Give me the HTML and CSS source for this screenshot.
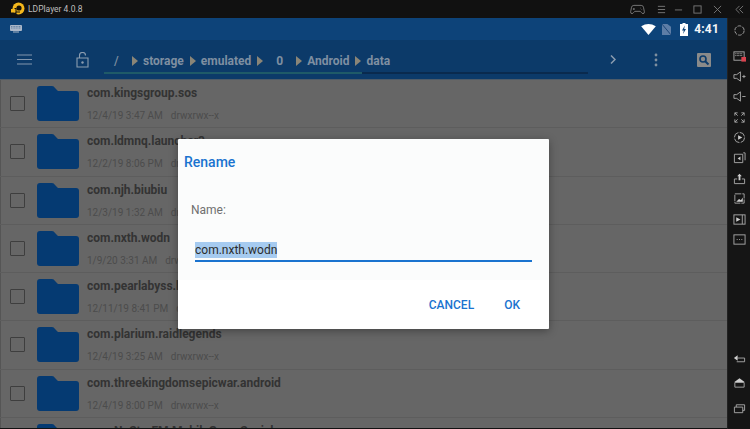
FILE: index.html
```html
<!DOCTYPE html>
<html lang="en">
<head>
<meta charset="utf-8">
<title>LDPlayer</title>
<link rel="stylesheet" href="styles.css">
</head>
<body>
<div class="window">
  <header class="titlebar">
    <svg class="logo" viewBox="0 0 14 14"><circle cx="7.500" cy="6.500" r="6" fill="#f5b81c"/><circle cx="8" cy="6" r="2.600" fill="#171208"/><rect x="3.500" y="6" width="2" height="7.500" fill="#111"/><rect x="0" y="7" width="4.500" height="3.500" fill="#f5b81c"/><rect x="5" y="9.500" width="4" height="1" fill="#171208"/></svg>
    <span class="app-name">LDPlayer 4.0.8</span>
    <div class="win-controls">
      <svg viewBox="0 0 16 12" class="wc wc-pad"><path d="M4 1.500h8q2 0 2.500 2l1 5q.2 2-1.500 2-1 0-2-1.500l-1-1H5l-1 1Q3 10.500 2 10.500 .3 10.500 .5 8.500l1-5Q2 1.500 4 1.500ZM4 4.500v2M3 5.500h2M11 4.500h.5M12.500 6h.5" /></svg>
      <svg viewBox="0 0 10 10" class="wc wc-menu"><path d="M1 1.500h8M1 5h8M1 8.500h8"/></svg>
      <svg viewBox="0 0 10 10" class="wc wc-min"><path d="M1 5.500h8"/></svg>
      <svg viewBox="0 0 10 10" class="wc wc-max"><rect x="1" y="1" width="8" height="8"/></svg>
      <svg viewBox="0 0 10 10" class="wc wc-close"><path d="M1 1l8 8M9 1l-8 8"/></svg>
      <svg viewBox="0 0 10 10" class="wc wc-collapse"><path d="M5 1L1 5l4 4M9 1L5 5l4 4"/></svg>
    </div>
  </header>
  <div class="body">
    <main class="android">
      <div class="statusbar">
        <svg class="kbd" viewBox="0 0 12 8"><rect width="12" height="6" rx="1" fill="#aab7c8"/><path d="M1 1.500h10M1 3h10" stroke="#39618f" stroke-width=".6" stroke-dasharray="1 .6"/><rect x="3" y="6.500" width="6" height="1" fill="#aab7c8"/></svg>
        <div class="status-right">
          <svg class="st-wifi" viewBox="0 0 16 12"><path d="M0 2.500Q8-2.500 16 2.500L8 12Z" fill="#fff"/></svg>
          <svg class="st-sim" viewBox="0 0 10 12"><path d="M0 0h6l4 3v9H0Z" fill="#5d7da6"/><path d="M0 0l10 12" stroke="#163f70" stroke-width="1"/></svg>
          <svg class="st-batt" viewBox="0 0 8 13"><path d="M2.500 0h3v1H8v12H0V1h2.500Z" fill="#fff"/><path d="M4.800 2.500L2 7.500h1.800L3 11l3-5H4.200Z" fill="#0d4379"/></svg>
          <span class="clock">4:41</span>
        </div>
      </div>
      <div class="toolbar">
        <svg class="tb-menu" viewBox="0 0 15 11"><path d="M0 1h15M0 5.500h15M0 10h15"/></svg>
        <svg class="tb-lock" viewBox="0 0 13 16"><path d="M3.500 6V3.500a3 3 0 0 1 6 0M1 6h11v9H1Z"/><circle cx="6.500" cy="10.500" r="1.200" fill="#8c9db0" stroke="none"/></svg>
        <div class="crumbs-wrap">
          <nav class="crumbs">
            <span class="crumb crumb-root">/</span><i class="arrow"></i>
            <span class="crumb">storage</span><i class="arrow"></i>
            <span class="crumb">emulated</span><i class="arrow"></i>
            <span class="crumb crumb-zero">0</span><i class="arrow"></i>
            <span class="crumb">Android</span><i class="arrow"></i>
            <span class="crumb">data</span>
          </nav>
          <div class="progress"></div>
        </div>
        <svg class="tb-next" viewBox="0 0 6 9"><path d="M1 .5L5 4.500 1 8.500"/></svg>
        <svg class="tb-more" viewBox="0 0 4 14"><circle cx="2" cy="2" r="1.400"/><circle cx="2" cy="7" r="1.400"/><circle cx="2" cy="12" r="1.400"/></svg>
        <svg class="tb-search" viewBox="0 0 14 14"><rect width="14" height="14" rx="1" fill="#8a8a8a"/><circle cx="6" cy="6" r="3" fill="none" stroke="#0c3b6b" stroke-width="1.600"/><path d="M8.200 8.200L11.500 11.500" stroke="#0c3b6b" stroke-width="2"/></svg>
      </div>
      <ul class="files">
        <li class="row"><span class="check"></span><svg class="folder" viewBox="0 0 42 35"><path d="M3 0h12q2 0 3 2l3 3h18q3 0 3 3v24q0 3-3 3H3q-3 0-3-3V3q0-3 3-3Z"/></svg><div class="info"><div class="name">com.kingsgroup.sos</div><div class="meta"><span>12/4/19 3:47 AM</span><span>drwxrwx--x</span></div></div></li>
        <li class="row"><span class="check"></span><svg class="folder" viewBox="0 0 42 35"><path d="M3 0h12q2 0 3 2l3 3h18q3 0 3 3v24q0 3-3 3H3q-3 0-3-3V3q0-3 3-3Z"/></svg><div class="info"><div class="name">com.ldmnq.launcher3</div><div class="meta"><span>12/2/19 8:06 PM</span><span>drwxrwx--x</span></div></div></li>
        <li class="row"><span class="check"></span><svg class="folder" viewBox="0 0 42 35"><path d="M3 0h12q2 0 3 2l3 3h18q3 0 3 3v24q0 3-3 3H3q-3 0-3-3V3q0-3 3-3Z"/></svg><div class="info"><div class="name">com.njh.biubiu</div><div class="meta"><span>12/3/19 1:32 AM</span><span>drwxrwx--x</span></div></div></li>
        <li class="row"><span class="check"></span><svg class="folder" viewBox="0 0 42 35"><path d="M3 0h12q2 0 3 2l3 3h18q3 0 3 3v24q0 3-3 3H3q-3 0-3-3V3q0-3 3-3Z"/></svg><div class="info"><div class="name">com.nxth.wodn</div><div class="meta"><span>1/9/20 3:31 AM</span><span>drwxrwx--x</span></div></div></li>
        <li class="row"><span class="check"></span><svg class="folder" viewBox="0 0 42 35"><path d="M3 0h12q2 0 3 2l3 3h18q3 0 3 3v24q0 3-3 3H3q-3 0-3-3V3q0-3 3-3Z"/></svg><div class="info"><div class="name">com.pearlabyss.blackdesertm</div><div class="meta"><span>12/11/19 8:41 PM</span><span>drwxrwx--x</span></div></div></li>
        <li class="row"><span class="check"></span><svg class="folder" viewBox="0 0 42 35"><path d="M3 0h12q2 0 3 2l3 3h18q3 0 3 3v24q0 3-3 3H3q-3 0-3-3V3q0-3 3-3Z"/></svg><div class="info"><div class="name">com.plarium.raidlegends</div><div class="meta"><span>12/4/19 3:25 AM</span><span>drwxrwx--x</span></div></div></li>
        <li class="row"><span class="check"></span><svg class="folder" viewBox="0 0 42 35"><path d="M3 0h12q2 0 3 2l3 3h18q3 0 3 3v24q0 3-3 3H3q-3 0-3-3V3q0-3 3-3Z"/></svg><div class="info"><div class="name">com.threekingdomsepicwar.android</div><div class="meta"><span>12/4/19 8:00 PM</span><span>drwxrwx--x</span></div></div></li>
        <li class="row"><span class="check"></span><svg class="folder" viewBox="0 0 42 35"><path d="M3 0h12q2 0 3 2l3 3h18q3 0 3 3v24q0 3-3 3H3q-3 0-3-3V3q0-3 3-3Z"/></svg><div class="info"><div class="name">com.NoStarFM.MobileGameSocial</div></div></li>
      </ul>
      <div class="dialog">
        <h2 class="dlg-title">Rename</h2>
        <div class="dlg-label">Name:</div>
        <div class="dlg-input"><span class="selected">com.nxth.wodn</span></div>
        <div class="dlg-actions"><span class="btn">CANCEL</span><span class="btn">OK</span></div>
      </div>
    </main>
    <aside class="sidebar">
      <svg class="side-first" viewBox="0 0 14 14"><circle cx="7" cy="7" r="5" stroke-dasharray="4 1.200"/></svg>
      <svg viewBox="0 0 14 14"><rect x="1" y="2" width="11" height="9"/><path d="M2.500 4h8M2.500 6h8" stroke-dasharray="1 .6"/><rect class="red" x="9" y="7.500" width="5" height="5"/></svg>
      <svg viewBox="0 0 14 14"><path d="M1 5h3l4-3v10L4 9H1ZM10 7h3.500M11.800 5.300v3.400"/></svg>
      <svg viewBox="0 0 14 14"><path d="M1 5h3l4-3v10L4 9H1ZM10 7h3.500"/></svg>
      <svg viewBox="0 0 14 14"><path d="M2 5V2h3M2 2l3 3M12 5V2H9M12 2L9 5M2 9v3h3M2 12l3-3M12 9v3H9M12 12L9 9"/></svg>
      <svg viewBox="0 0 14 14"><circle cx="7" cy="7" r="5.500" stroke-dasharray="7 1.500"/><path class="fill" d="M5.500 4.500L10 7l-4.500 2.500Z"/></svg>
      <svg viewBox="0 0 14 14"><path d="M1.500 3.500h9v9h-9ZM11 2h2v8"/><path class="fill" d="M8 6v4L5 8Z"/></svg>
      <svg viewBox="0 0 14 14"><path d="M1.500 7.500h3M9.500 7.500h3v5h-11v-5"/><path class="fill" d="M7 2l2.500 2.500H8V9H6V4.500H4.500Z"/></svg>
      <svg viewBox="0 0 14 14"><rect x="2" y="2" width="10" height="10" stroke-dasharray="7 1"/><path class="fill" d="M3.500 10.500l3-3 2 1.500 2-3v4.500Z"/></svg>
      <svg viewBox="0 0 14 14"><rect x="1" y="2" width="12" height="10"/><path d="M10 2v10"/><path class="fill" d="M3.500 4.500L8 7l-4.500 2.500Z"/></svg>
      <svg viewBox="0 0 14 14"><rect x="1" y="2" width="12" height="10"/><path d="M4 7h1M6.500 7h1M9 7h1"/></svg>
      <div class="side-spacer"></div>
      <svg class="nav-back" viewBox="0 0 14 14"><path d="M5 6.500h7.500v4H4"/><path class="fill" d="M1 6.500L5 3.500v6Z"/></svg>
      <svg class="nav-home" viewBox="0 0 14 14"><path d="M2 7h10v5H2Z"/><path class="fill" d="M7 2.500L12.500 6.500h-11Z"/></svg>
      <svg class="nav-recent" viewBox="0 0 14 14"><path d="M1.500 5.500h9v6h-9ZM3.500 5.500V3h9v6h-2"/></svg>
    </aside>
  </div>
</div>
</body>
</html>
```
FILE: styles.css
```css
* { box-sizing: border-box; margin: 0; padding: 0; }
html, body { width: 750px; height: 429px; overflow: hidden; background: #111; }
body { font-family: Roboto, "Liberation Sans", sans-serif; }
.window { width: 750px; height: 429px; display: flex; flex-direction: column; }
.titlebar { height: 18px; flex: none; background: #111; display: flex; align-items: center; padding-left: 11px; }
.logo { width: 14px; height: 14px; }
.app-name { margin-left: 3px; font-size: 8.500px; color: #bdbdbd; }
.win-controls { margin-left: auto; display: flex; align-items: center; }
.wc { fill: none; stroke: #7c7c7c; stroke-width: 1; }
.wc-pad { width: 15px; height: 11px; margin-right: 12px; }
.wc-menu { width: 9px; height: 9px; margin-right: 8px; }
.wc-min { width: 9px; height: 9px; margin-right: 10px; }
.wc-max { width: 9px; height: 9px; margin-right: 11px; }
.wc-close { width: 9px; height: 9px; margin-right: 13px; }
.wc-collapse { width: 9px; height: 9px; margin-right: 6px; }
.body { flex: 1; display: flex; min-height: 0; }
.android { position: relative; width: 727px; flex: none; margin-bottom: 1px; display: flex; flex-direction: column; overflow: hidden; background: #666; }
.statusbar { height: 22px; flex: none; background: #0d4379; display: flex; align-items: center; padding: 0 8px 0 10px; }
.kbd { width: 12px; height: 8px; }
.status-right { margin-left: auto; display: flex; align-items: center; }
.st-wifi { width: 15px; height: 11px; margin-right: 6px; }
.st-sim { width: 9px; height: 11px; margin-right: 9px; }
.st-batt { width: 8px; height: 13px; margin-right: 6px; }
.clock { font-size: 12px; font-weight: 700; color: #f4f6f8; letter-spacing: .2px; }
.toolbar { height: 40px; flex: none; background: #0c3a69; display: flex; align-items: center; border-bottom: 1px solid #4e5b68; position: relative; }
.tb-menu { width: 15px; height: 11px; margin-left: 17px; fill: none; stroke: #8296ad; stroke-width: 1.200; }
.tb-lock { width: 13px; height: 16px; margin-left: 44px; fill: none; stroke: #8c9db0; stroke-width: 1.100; }
.crumbs-wrap { width: 484px; margin-left: 15px; align-self: stretch; display: flex; flex-direction: column; justify-content: flex-end; position: relative; }
.crumbs { display: flex; align-items: center; height: 19px; padding-left: 10px; margin-bottom: 2px; }
.crumb { font-size: 12px; font-weight: 700; color: #7f8fa1; }
.crumb-root { width: 12px; font-weight: 500; }
.crumb-zero { margin: 0 7px 0 8px; }
.arrow { width: 0; height: 0; flex: none; margin: 0 5px 0 6px; border-left: 6px solid #8a8577; border-top: 5px solid transparent; border-bottom: 5px solid transparent; }
.progress { height: 2px; margin-bottom: 5px; background: linear-gradient(to right, #1f5a68 0 258px, #0a2a4e 258px); }
.tb-next { width: 6px; height: 9px; margin-left: 22px; fill: none; stroke: #8c9db0; stroke-width: 1.500; }
.tb-more { width: 4px; height: 14px; margin-left: 38px; fill: #7f8f9f; }
.tb-search { width: 14px; height: 14px; margin-left: 39px; }
.files { list-style: none; flex: 1; min-height: 0; box-shadow: inset 1px 0 #555; }
.row { height: 48.300px; display: flex; padding: 6px 0 0 10px; border-bottom: 1px solid #5d5d5d; }
.check { width: 15px; height: 15px; margin-top: 10px; border: 1.500px solid #3e3e3e; border-radius: 1px; flex: none; }
.folder { width: 42px; height: 35px; margin-left: 12px; fill: #053a72; flex: none; }
.info { margin-left: 8px; }
.name { font-size: 12px; font-weight: 700; line-height: 14px; color: #333; white-space: nowrap; }
.meta { display: flex; gap: 8px; margin-top: 10px; font-size: 10px; line-height: 12px; color: #4c4c4c; white-space: nowrap; }
.dialog { position: absolute; left: 178px; top: 121px; width: 371px; height: 190px; background: linear-gradient(#fbfcfc 0 141px, #fff 141px); border-radius: 1px; box-shadow: 0 2px 8px rgba(0,0,0,.35); padding: 15px 6px 0; display: flex; flex-direction: column; }
.dlg-title { font-size: 14px; line-height: 16px; font-weight: 500; color: #1a73cf; }
.dlg-label { margin: 33px 0 0 7px; font-size: 12px; line-height: 14px; color: #6f6f6f; }
.dlg-input { margin: 23px 11px 0 11px; height: 22px; padding-bottom: 2px; border-bottom: 2px solid #1a73cf; display: flex; align-items: flex-end; }
.selected { background: #a6cbf0; font-size: 12px; line-height: 16px; color: #2c2c2c; }
.dlg-actions { margin-top: auto; display: flex; justify-content: flex-end; gap: 30px; padding: 0 23px 17px 0; }
.btn { font-size: 12px; font-weight: 500; line-height: 14px; color: #1a73cf; }
.sidebar { flex: 1; background: #151515; border-left: 1px solid #222; display: flex; flex-direction: column; align-items: center; padding: 5.500px 0 14.500px; }
.sidebar svg { width: 13px; height: 13px; margin-bottom: 7.400px; flex: none; fill: none; stroke: #a8a8a8; stroke-width: 1; }
.sidebar .side-first { margin-bottom: 13px; }
.sidebar .nav-back { margin-bottom: 11px; }
.sidebar .nav-home { margin-bottom: 13px; }
.sidebar .nav-recent { margin-bottom: 0; }
.sidebar .fill { fill: #cfcfcf; stroke: none; }
.sidebar .red { fill: #d9434f; stroke: none; }
.side-spacer { flex: 1; }
```
